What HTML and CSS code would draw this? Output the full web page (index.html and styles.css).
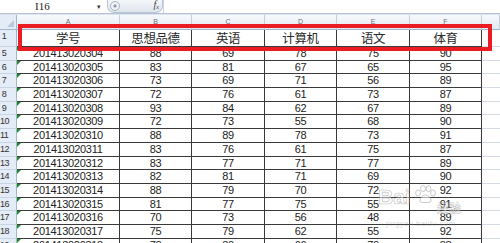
FILE: index.html
```html
<!DOCTYPE html>
<html lang="zh-CN">
    <head>
        <meta charset="UTF-8">
        <title>成绩表</title>
        <link rel="stylesheet" href="styles.css">
    </head>
    <body>
        <div class="formula-bar">
            <div class="name-box">I16</div>
            <div class="name-arrow">&#9662;</div>
            <div class="fx-pill">
                <span class="grip"></span>
                <span class="fx">f<sub>x</sub></span>
            </div>
            <div class="formula-input"></div>
        </div>
        <div class="strip"></div>

        <div class="sheet">
            <div class="corner"></div>
            <div class="col-head">A</div>
            <div class="col-head">B</div>
            <div class="col-head">C</div>
            <div class="col-head">D</div>
            <div class="col-head">E</div>
            <div class="col-head">F</div>
            <div class="col-head last"></div>

            <div class="row-head">1</div>
            <div class="cell title">学号</div>
            <div class="cell title">思想品德</div>
            <div class="cell title">英语</div>
            <div class="cell title">计算机</div>
            <div class="cell title">语文</div>
            <div class="cell title">体育</div>
            <div class="cell empty"></div>

            <div class="row-head">5</div><div class="cell id">201413020304</div><div class="cell">88</div><div class="cell">69</div><div class="cell">78</div><div class="cell">75</div><div class="cell">90</div><div class="cell empty"></div>
            <div class="row-head">6</div><div class="cell id">201413020305</div><div class="cell">83</div><div class="cell">81</div><div class="cell">67</div><div class="cell">65</div><div class="cell">95</div><div class="cell empty"></div>
            <div class="row-head">7</div><div class="cell id">201413020306</div><div class="cell">73</div><div class="cell">69</div><div class="cell">71</div><div class="cell">56</div><div class="cell">89</div><div class="cell empty"></div>
            <div class="row-head">8</div><div class="cell id">201413020307</div><div class="cell">72</div><div class="cell">76</div><div class="cell">61</div><div class="cell">73</div><div class="cell">87</div><div class="cell empty"></div>
            <div class="row-head">9</div><div class="cell id">201413020308</div><div class="cell">93</div><div class="cell">84</div><div class="cell">62</div><div class="cell">67</div><div class="cell">89</div><div class="cell empty"></div>
            <div class="row-head">10</div><div class="cell id">201413020309</div><div class="cell">72</div><div class="cell">73</div><div class="cell">55</div><div class="cell">68</div><div class="cell">90</div><div class="cell empty"></div>
            <div class="row-head">11</div><div class="cell id">201413020310</div><div class="cell">88</div><div class="cell">89</div><div class="cell">78</div><div class="cell">73</div><div class="cell">91</div><div class="cell empty"></div>
            <div class="row-head">12</div><div class="cell id">201413020311</div><div class="cell">83</div><div class="cell">76</div><div class="cell">61</div><div class="cell">75</div><div class="cell">87</div><div class="cell empty"></div>
            <div class="row-head">13</div><div class="cell id">201413020312</div><div class="cell">83</div><div class="cell">77</div><div class="cell">71</div><div class="cell">77</div><div class="cell">89</div><div class="cell empty"></div>
            <div class="row-head">14</div><div class="cell id">201413020313</div><div class="cell">82</div><div class="cell">81</div><div class="cell">71</div><div class="cell">69</div><div class="cell">90</div><div class="cell empty"></div>
            <div class="row-head">15</div><div class="cell id">201413020314</div><div class="cell">88</div><div class="cell">79</div><div class="cell">70</div><div class="cell">72</div><div class="cell">92</div><div class="cell empty"></div>
            <div class="row-head">16</div><div class="cell id">201413020315</div><div class="cell">81</div><div class="cell">77</div><div class="cell">75</div><div class="cell">55</div><div class="cell">91</div><div class="cell empty"></div>
            <div class="row-head">17</div><div class="cell id">201413020316</div><div class="cell">70</div><div class="cell">73</div><div class="cell">56</div><div class="cell">48</div><div class="cell">89</div><div class="cell empty"></div>
            <div class="row-head">18</div><div class="cell id">201413020317</div><div class="cell">75</div><div class="cell">79</div><div class="cell">62</div><div class="cell">55</div><div class="cell">92</div><div class="cell empty"></div>
            <div class="row-head">19</div><div class="cell id">201413020318</div><div class="cell">78</div><div class="cell">80</div><div class="cell">66</div><div class="cell">70</div><div class="cell">88</div><div class="cell empty"></div>

            <!-- annotation box round the title row -->
            <div class="mark"></div>

            <div class="watermark">
                <span class="wm-bai">Bai</span>
                <svg class="wm-paw" width="24" height="18" viewBox="0 0 24 18">
                    <g fill="rgba(255,255,255,.55)" stroke="rgba(110,110,110,.45)" stroke-width=".8">
                        <ellipse cx="5" cy="8" rx="2.4" ry="3"/>
                        <ellipse cx="10" cy="3.6" rx="2.4" ry="3"/>
                        <ellipse cx="15.5" cy="3.6" rx="2.4" ry="3"/>
                        <ellipse cx="20" cy="8" rx="2.4" ry="3"/>
                        <path d="M7 16c0-4 3-6 5.5-6s5.5 2 5.5 6c0 1.5-2 1.5-5.5 1.5S7 17.5 7 16z"/>
                    </g>
                </svg>
                <span class="wm-jy">经验</span>
                <span class="wm-url">jingyan.baidu.com</span>
            </div>
        </div>
    </body>
</html>
```

FILE: styles.css
```css
:root{
    box-sizing: border-box;
    font-family: "Liberation Sans", Arial, sans-serif;
}
*{
    box-sizing: inherit;
}
body{
    margin: 0;
    width: 500px;
    height: 243px;
    overflow: hidden;
    background: #fff;
}

/* formula bar */
.formula-bar{
    display: flex;
    align-items: center;
    height: 14px;
    border-bottom: 1px solid #b4c2d4;
    background: #fff;
}
.name-box{
    width: 97px;
    padding-left: 35px;
    font-family: "Liberation Serif", serif;
    font-size: 11px;
    color: #222;
    line-height: 13px;
}
.name-arrow{
    width: 9px;
    font-size: 7px;
    color: #333;
    line-height: 13px;
}
.fx-pill{
    display: flex;
    align-items: center;
    justify-content: space-between;
    width: 56px;
    height: 13px;
    margin-left: 1px;
    padding: 0 3px 0 2px;
    border: 1px solid #b9c5d6;
    border-top: none;
    border-radius: 0 0 7px 7px;
    background: linear-gradient(#f4f6f9, #dfe5ed);
}
.grip{
    width: 10px;
    height: 10px;
    border: 1px solid #aab5c4;
    border-radius: 50%;
    background: radial-gradient(#8e99a8 1px, #eef1f5 2px);
}
.fx{
    font-family: "Liberation Serif", serif;
    font-style: italic;
    font-size: 10px;
    color: #444;
    line-height: 10px;
}
.fx sub{
    font-size: 6px;
    vertical-align: -1px;
}
.formula-input{
    flex: 1;
    height: 13px;
    border-left: 1px solid #c9d3df;
}
.strip{
    height: 1px;
    background: #dbe4f0;
}

/* sheet grid */
.sheet{
    position: relative;
    display: grid;
    grid-template-columns: 17px 103px 72px 73px 72px 73px 72px 1fr;
    grid-template-rows: 15px 17px;
    grid-auto-rows: 13.7px;
}
.corner{
    position: relative;
    background: #e4ecf7;
    border-right: 1px solid #9eb6ce;
    border-bottom: 1px solid #9eb6ce;
}
.corner::after{
    content: "";
    position: absolute;
    right: 2px;
    bottom: 2px;
    border-left: 7px solid transparent;
    border-bottom: 7px solid #b8c8dc;
}
.col-head{
    background: linear-gradient(#f7f9fc, #e3e9f1);
    border-right: 1px solid #c3cfdd;
    border-bottom: 1px solid #9eb6ce;
    text-align: center;
    font-size: 7px;
    color: #6b6f75;
    line-height: 13px;
}
.row-head{
    background: #e4ecf7;
    border-right: 1px solid #9eb6ce;
    border-bottom: 1px solid #c6d4e4;
    padding-right: 8px;
    text-align: center;
    font-size: 9px;
    letter-spacing: -.5px;
    color: #333;
    line-height: 13px;
    overflow: hidden;
}
.cell{
    position: relative;
    border-right: 1px solid #3a3a3a;
    border-bottom: 1px solid #3a3a3a;
    text-align: center;
    font-size: 11px;
    letter-spacing: -.3px;
    color: #222;
    line-height: 13px;
    white-space: nowrap;
}
.cell.title{
    font-family: "Noto Sans CJK SC", sans-serif;
    font-size: 12.5px;
    letter-spacing: -.4px;
    color: #2a2a2a;
    line-height: 16px;
}
.cell.empty{
    border-right: none;
    border-bottom: 1px solid #d5dce7;
}
.cell.id::before{
    content: "";
    position: absolute;
    left: 0;
    top: 0;
    border-top: 4px solid #218a26;
    border-right: 4px solid transparent;
}

/* red annotation */
.mark{
    position: absolute;
    left: 18px;
    top: 9px;
    width: 474px;
    height: 27px;
    border: 4px solid #ec1c24;
}

/* faint site watermark */
.watermark{
    position: absolute;
    left: 378px;
    top: 168px;
    width: 100px;
    height: 48px;
    pointer-events: none;
}
.wm-bai{
    position: absolute;
    left: 0;
    top: 2px;
    font-size: 21px;
    font-weight: bold;
    color: rgba(255,255,255,.5);
    -webkit-text-stroke: .7px rgba(110,110,110,.45);
}
.wm-paw{
    position: absolute;
    left: 35px;
    top: 2px;
}
.wm-jy{
    position: absolute;
    left: 59px;
    top: 16px;
    font-family: "Noto Sans CJK SC", sans-serif;
    font-size: 12px;
    font-weight: bold;
    color: rgba(255,255,255,.5);
    -webkit-text-stroke: .5px rgba(110,110,110,.45);
}
.wm-url{
    position: absolute;
    left: 8px;
    top: 36px;
    font-size: 8px;
    letter-spacing: .3px;
    color: rgba(140,140,140,.35);
}
```
